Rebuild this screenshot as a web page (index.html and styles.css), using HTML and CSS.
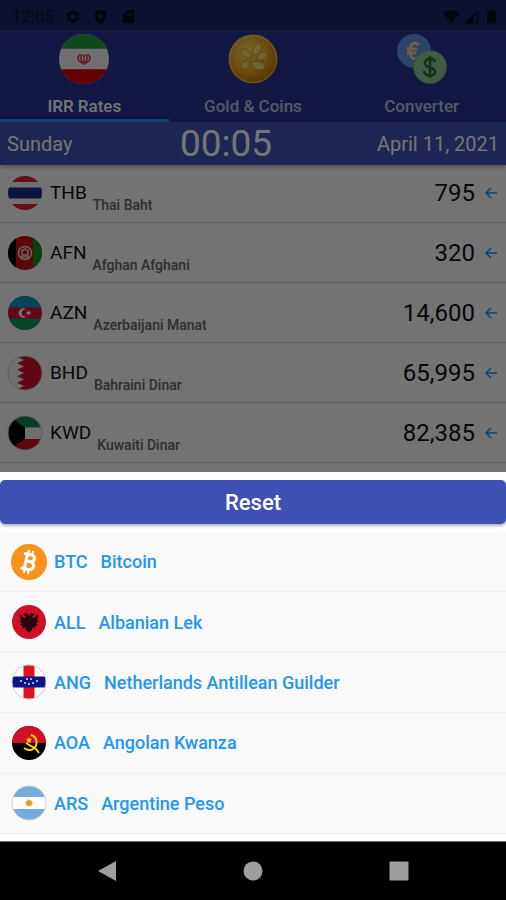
FILE: index.html
```html
<!DOCTYPE html>
<html lang="en">
<head>
<meta charset="utf-8">
<meta name="viewport" content="width=device-width, initial-scale=1">
<title>IRR Rates</title>
<link rel="stylesheet" href="styles.css">
</head>
<body>
<svg class="defs" aria-hidden="true">
  <defs>
    <clipPath id="round"><circle cx="18" cy="18" r="17"/></clipPath>
    <radialGradient id="gold" cx="40%" cy="35%" r="70%">
      <stop offset="0" stop-color="#ffe070"/>
      <stop offset="0.55" stop-color="#eba91c"/>
      <stop offset="1" stop-color="#b86f0c"/>
    </radialGradient>
  </defs>
</svg>
<div class="screen">
  <main class="app">
    <div class="status">
      <span>12:05</span>
      <svg class="status-icon" viewBox="0 0 24 24"><path fill-rule="evenodd" d="M19.4 13a7.500 7.500 0 0 0 0-2l2.200-1.700-2-3.500-2.600 1a8 8 0 0 0-1.700-1L15 3h-5l-.4 2.800a8 8 0 0 0-1.700 1l-2.600-1-2 3.500L5.500 11a7.500 7.500 0 0 0 0 2l-2.200 1.700 2 3.500 2.600-1a8 8 0 0 0 1.700 1L10 21h5l.4-2.800a8 8 0 0 0 1.700-1l2.600 1 2-3.500zM12.500 8a4 4 0 1 1 0 8 4 4 0 0 1 0-8z"/></svg>
      <svg class="status-icon" viewBox="0 0 24 24"><path fill-rule="evenodd" d="M12 2l8 3v6c0 6-4 9-8 11-4-2-8-5-8-11V5zM12 7l-4 4 2 5h4l2-5z"/></svg>
      <svg class="status-icon" viewBox="0 0 24 24"><path fill-rule="evenodd" d="M10 3h10v18H4V9zM9 7v4h2V7zm3 0v4h2V7zm3 0v4h2V7z"/></svg>
      <span class="spacer"></span>
      <svg class="status-icon" viewBox="0 0 24 24"><path d="M12 21L0 7a19 19 0 0 1 24 0z"/></svg>
      <svg class="status-icon" viewBox="0 0 24 24"><path fill-rule="evenodd" d="M2 22L22 2v20zM15 12v8h5V7z"/></svg>
      <svg class="status-icon" viewBox="0 0 24 24"><path d="M9 2h6v2h3v18H6V4h3z"/></svg>
    </div>
    <nav class="tabs">
      <button class="tab active" type="button">
        <svg class="tab-icon" viewBox="1 1 34 34"><g clip-path="url(#round)"><path fill="#f5f5f5" d="M0 0h36v36H0z"/><path fill="#239f40" d="M0 0h36v11H0z"/><path fill="#da0000" d="M0 25h36v11H0z"/></g><g fill="none" stroke="#e0304a"><path d="M16 15c-3 1-3 4 1 6M20 15c3 1 3 4-1 6M17 15c-2 2-1 5 1 6 2-1 3-4 1-6M18 15v7"/></g></svg>
        <span>IRR Rates</span>
      </button>
      <button class="tab" type="button">
        <svg class="tab-icon" viewBox="0 0 50 50"><circle cx="25" cy="25" r="24.500" fill="url(#gold)"/><circle cx="25" cy="25" r="23.500" fill="none" stroke="#f5cf60"/><circle cx="25" cy="25" r="20.500" fill="none" stroke="#b87a18" stroke-dasharray="1 3"/><g fill="#f9d870" stroke="#d6941c"><path d="M23 24c-8 1-11-4-9-9 5-1 9 2 9 9zM25 22c-2-8 2-12 7-13 4 5 0 11-7 13zM28 25c2-6 7-8 11-6 1 5-5 9-11 6zM23 28c6-2 13 0 14 6-6 4-12 1-14-6zM22 27c0 6-4 9-9 7-1-5 3-8 9-7z"/></g></svg>
        <span>Gold &amp; Coins</span>
      </button>
      <button class="tab" type="button">
        <svg class="tab-icon" viewBox="0 0 50 50"><circle cx="17" cy="17" r="17" fill="#5f95e0"/><path fill="none" stroke="#f2d08c" stroke-width="3" d="M22 11c-5-4-9-1-9 6s4 10 9 6M10 15h10M10 19h9"/><circle cx="33" cy="33" r="16.500" fill="#8bcb95" stroke="#5aa86a"/><path fill="none" stroke="#20702f" stroke-width="2.500" d="M38 28c-1-5-10-4-10 1 0 6 10 3 10 9 0 5-10 5-11-1M33 22v22"/></svg>
        <span>Converter</span>
      </button>
    </nav>
    <header class="clock">
      <span>Sunday</span>
      <time class="time">00:05</time>
      <span class="date">April 11, 2021</span>
    </header>
    <ul class="rates">
      <li class="rate">
        <svg class="flag" viewBox="0 0 36 36"><g clip-path="url(#round)"><path fill="#f5f5f5" d="M0 0h36v36H0z"/><path fill="#e0202c" d="M0 0h36v7H0zM0 29h36v7H0z"/><path fill="#1a2a8c" d="M0 12.500h36v11H0z"/></g></svg>
        <span class="code">THB</span><span class="name">Thai Baht</span><span class="value">795</span>
        <svg class="arrow" viewBox="0 0 14 14"><path d="M13 7H2M7 2L2 7l5 5"/></svg>
      </li>
      <li class="rate">
        <svg class="flag" viewBox="0 0 36 36"><g clip-path="url(#round)"><path fill="#c81010" d="M0 0h36v36H0z"/><path d="M0 0h9v36H0z"/><path fill="#109018" d="M26 0h10v36H26z"/></g><g fill="none" stroke="#f0d8d0" stroke-width="1.500"><circle cx="18" cy="18" r="6.500"/><path d="M15 20v-4l3-2 3 2v4zM14 22h8"/></g></svg>
        <span class="code">AFN</span><span class="name">Afghan Afghani</span><span class="value">320</span>
        <svg class="arrow" viewBox="0 0 14 14"><path d="M13 7H2M7 2L2 7l5 5"/></svg>
      </li>
      <li class="rate">
        <svg class="flag" viewBox="0 0 36 36"><g clip-path="url(#round)"><path fill="#e00d36" d="M0 0h36v36H0z"/><path fill="#1095c4" d="M0 0h36v12.500H0z"/><path fill="#109b55" d="M0 23.500h36V36H0z"/></g><path fill="#fff" d="M19 14.500a4.500 4.500 0 1 0 0 7 3.600 3.600 0 1 1 0-7zM21.500 15l.7 2 2-.5-1 1.500 1 1.500-2-.5-.7 2-.7-2-2 .5 1-1.500-1-1.500 2 .5z"/></svg>
        <span class="code">AZN</span><span class="name">Azerbaijani Manat</span><span class="value">14,600</span>
        <svg class="arrow" viewBox="0 0 14 14"><path d="M13 7H2M7 2L2 7l5 5"/></svg>
      </li>
      <li class="rate">
        <svg class="flag" viewBox="0 0 36 36"><g clip-path="url(#round)"><path fill="#f5f5f5" d="M0 0h36v36H0z"/><path fill="#d01030" d="M36 0H10v2l7 3-7 3.200 7 3.200-7 3.300 7 3.300-7 3.300 7 3.200-7 3.200 7 3.200-7 3.300v2h26z"/></g><circle class="rim" cx="18" cy="18" r="17"/></svg>
        <span class="code">BHD</span><span class="name">Bahraini Dinar</span><span class="value">65,995</span>
        <svg class="arrow" viewBox="0 0 14 14"><path d="M13 7H2M7 2L2 7l5 5"/></svg>
      </li>
      <li class="rate">
        <svg class="flag" viewBox="0 0 36 36"><g clip-path="url(#round)"><path fill="#f5f5f5" d="M0 0h36v36H0z"/><path fill="#108858" d="M0 0h36v12.500H0z"/><path fill="#d01026" d="M0 24h36v12H0z"/><path d="M0 0l18 12.500V24L0 36z"/></g><circle class="rim" cx="18" cy="18" r="17"/></svg>
        <span class="code">KWD</span><span class="name">Kuwaiti Dinar</span><span class="value">82,385</span>
        <svg class="arrow" viewBox="0 0 14 14"><path d="M13 7H2M7 2L2 7l5 5"/></svg>
      </li>
    </ul>
    <div class="scrim"></div>
  </main>
  <section class="sheet">
    <button class="reset" type="button">Reset</button>
    <div class="options">
      <button class="option" type="button">
        <svg class="flag" viewBox="1 1 34 34"><circle cx="18" cy="18" r="17" fill="#f7931a"/><g fill="none" stroke="#fff" transform="rotate(13 18 18)"><path stroke-width="3" d="M15 11v14M11.500 11H19c4.500 0 4.500 6.500 0 6.500h-4M19 17.500c5.500 0 5.500 7.500 0 7.500h-7.500"/><path stroke-width="2" d="M15.500 7v4M19.500 7v4M15.500 25v4M19.500 25v4"/></g></svg>
        <span>BTC</span><span>Bitcoin</span>
      </button>
      <button class="option" type="button">
        <svg class="flag" viewBox="0 0 36 36"><circle cx="18" cy="18" r="17" fill="#d01027"/><path fill="#26080c" d="M18 12l-2-3-4 1 3 3-2 1-4-4v5l2 1-3 1 3 2-2 2 3 1-1 3 3-2 1 3 3 3 3-3 1-3 3 2-1-3 3-1-2-2 3-2-3-1 2-1v-5l-4 4-2-1 3-3-4-1z"/></svg>
        <span>ALL</span><span>Albanian Lek</span>
      </button>
      <button class="option" type="button">
        <svg class="flag" viewBox="0 0 36 36"><g clip-path="url(#round)"><path fill="#fff" d="M0 0h36v36H0z"/><path fill="#e01020" d="M12.500 0h11v36h-11z"/><path fill="#0c1488" d="M0 12.500h36v11H0z"/></g><circle class="rim" cx="18" cy="18" r="17"/><g fill="#dfe2f5"><circle cx="10" cy="17" r="1"/><circle cx="14" cy="19" r="1"/><circle cx="16" cy="15" r="1"/><circle cx="20" cy="15" r="1"/><circle cx="18" cy="20" r="1"/><circle cx="22" cy="19" r="1"/><circle cx="26" cy="17" r="1"/></g></svg>
        <span>ANG</span><span>Netherlands Antillean Guilder</span>
      </button>
      <button class="option" type="button">
        <svg class="flag" viewBox="0 0 36 36"><g clip-path="url(#round)"><path d="M0 0h36v36H0z"/><path fill="#d01027" d="M0 0h36v18H0z"/></g><g fill="none" stroke="#ffd800" stroke-width="2"><path d="M20 10c7 2 7 11 2 14-3 2-6 1-9-1M15 18l10 6 3 4"/></g><path fill="#ffd800" d="M18 12l1 2h2l-1.500 1.500.5 2.500-2-1-2 1 .5-2.500L15 14h2z"/></svg>
        <span>AOA</span><span>Angolan Kwanza</span>
      </button>
      <button class="option" type="button">
        <svg class="flag" viewBox="0 0 36 36"><g clip-path="url(#round)"><path fill="#fff" d="M0 0h36v36H0z"/><path fill="#74acdf" d="M0 0h36v12H0zM0 24h36v12H0z"/></g><circle class="rim" cx="18" cy="18" r="17"/><circle cx="18" cy="18" r="3" fill="#e89c2c"/><circle cx="18" cy="18" r="3.500" fill="none" stroke="#f0b860" stroke-dasharray="1 1"/></svg>
        <span>ARS</span><span>Argentine Peso</span>
      </button>
    </div>
  </section>
  <footer class="system">
    <button type="button" aria-label="Back"><svg viewBox="0 0 20 20"><path d="M1 10L19 0v20z"/></svg></button>
    <button type="button" aria-label="Home"><svg viewBox="0 0 20 20"><circle cx="10" cy="10" r="9.500"/></svg></button>
    <button type="button" aria-label="Overview"><svg viewBox="0 0 20 20"><rect width="19" height="19" x="0.500" y="0.500" rx="1"/></svg></button>
  </footer>
</div>
</body>
</html>
```
FILE: styles.css
```css
* {
  box-sizing: border-box;
}

body {
  margin: 0;
  font-family: Roboto, "Liberation Sans", sans-serif;
  background: #000;
}

button {
  border: 0;
  padding: 0;
  background: none;
  font: inherit;
  color: inherit;
}

svg {
  display: block;
  flex: none;
}

.defs {
  position: absolute;
  width: 0;
  height: 0;
}

.screen {
  display: flex;
  flex-direction: column;
  height: 100vh;
}

.app {
  position: relative;
  flex: 1;
  min-height: 0;
  overflow: hidden;
  background: #fafafa;
}

.scrim {
  position: absolute;
  inset: 0;
  z-index: 2;
  background: rgba(0, 0, 0, 0.54);
}

.status {
  display: flex;
  align-items: center;
  gap: 10px;
  height: 30px;
  padding: 2px 6px 0 12px;
  background: #1d276c;
  color: #0c1130;
  font-size: 17px;
}

.status-icon {
  width: 17px;
  height: 17px;
  fill: #080b20;
}

.status-icon + .status-icon {
  margin-left: 1px;
}

.spacer {
  flex: 1;
}

.spacer ~ .status-icon {
  margin-left: -7px;
}

.tabs {
  display: grid;
  grid-template-columns: repeat(3, 1fr);
  height: 92px;
  background: #283593;
}

.tab {
  display: flex;
  flex-direction: column;
  align-items: center;
  gap: 12px;
  padding-top: 4px;
  border-bottom: 3px solid transparent;
  font-size: 17px;
  line-height: 20px;
  font-weight: 500;
  color: #bcc1e2;
}

.tab.active {
  border-color: #2196f3;
  color: #fff;
}

.tab-icon {
  width: 50px;
  height: 50px;
}

.clock {
  position: relative;
  z-index: 1;
  display: grid;
  grid-template-columns: 1fr auto 1fr;
  align-items: center;
  height: 43px;
  padding: 0 7px;
  background: #3f51b5;
  box-shadow: 0 2px 4px rgba(0, 0, 0, 0.3);
  color: #fff;
  font-size: 20px;
}

.time {
  padding-right: 54px;
  font-size: 37px;
  line-height: 43px;
}

.date {
  text-align: right;
}

.rates {
  margin: -2px 0 0;
  padding: 0;
  list-style: none;
}

.rate {
  display: flex;
  align-items: center;
  height: 60px;
  padding: 0 8px 0 7px;
  border-bottom: 1px solid #c4c8ca;
  color: #111;
}

.flag {
  width: 36px;
  height: 36px;
}

.rim {
  fill: none;
  stroke: #ccc;
}

.code {
  margin: 0 6px 0 7px;
  font-size: 19px;
}

.name {
  padding-top: 24px;
  font-size: 14px;
  line-height: 16px;
  font-weight: 500;
  color: #666;
}

.value {
  margin-left: auto;
  font-size: 24px;
}

.arrow {
  width: 14px;
  height: 14px;
  margin-left: 9px;
  fill: none;
  stroke: #2196f3;
  stroke-width: 1.5;
}

.sheet {
  display: flex;
  flex-direction: column;
  gap: 8px;
  height: 41vh;
  padding: 8px 0 7px;
  background: #fff;
}

.reset {
  flex: none;
  height: 44px;
  border-radius: 5px;
  background: #3f51b5;
  box-shadow: 0 2px 3px rgba(0, 0, 0, 0.3);
  color: #fff;
  font-size: 22px;
  font-weight: 500;
}

.options {
  flex: 1;
  display: grid;
  grid-auto-rows: 1fr;
  background: #fafafa;
}

.option {
  display: flex;
  align-items: center;
  gap: 13px;
  padding: 0 11px;
  border-bottom: 1px solid #f0f0f0;
  font-size: 18px;
  font-weight: 500;
  color: #2196f3;
}

.option .flag {
  margin-right: -6px;
}

.system {
  display: flex;
  justify-content: center;
  align-items: center;
  gap: 126px;
  height: 59px;
  border-top: 1px solid #666;
  background: #000;
}

.system svg {
  width: 20px;
  height: 20px;
  fill: #9e9e9e;
}
```
